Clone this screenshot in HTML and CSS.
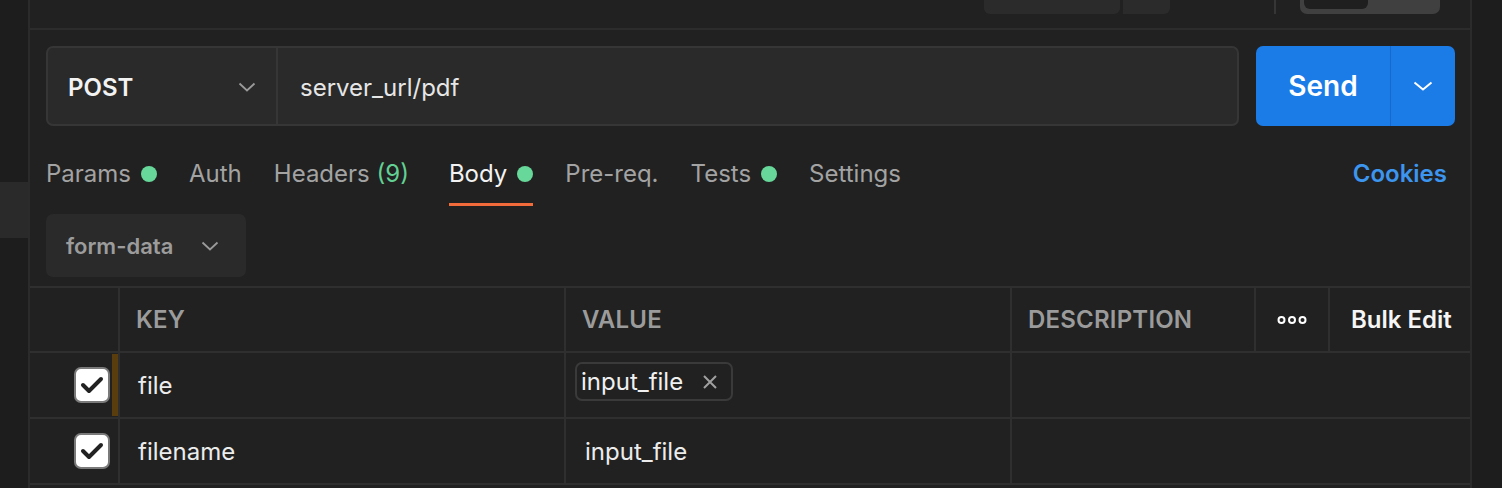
FILE: index.html
```html
<!DOCTYPE html>
<html>
<head>
<meta charset="utf-8">
<link rel="stylesheet" href="styles.css">
</head>
<body>
<div class="app">
  <div class="side side-left"><div class="side-block"></div></div>
  <div class="main">
    <div class="topbar">
      <div class="seg seg-a"></div>
      <div class="seg seg-b"></div>
      <div class="vline"></div>
      <div class="toggle"><div class="toggle-knob"></div></div>
    </div>

    <div class="request">
      <div class="urlbar">
        <div class="method">
          <span class="method-text">POST</span>
          <svg class="chev" width="18" height="10" viewBox="0 0 18 10"><path d="M1.5 1.5 L9 8.5 L16.5 1.5" fill="none" stroke="#9a9a9a" stroke-width="1.8"/></svg>
        </div>
        <div class="url">server_url/pdf</div>
      </div>
      <div class="send">
        <div class="send-main">Send</div>
        <div class="send-more">
          <svg width="20" height="10" viewBox="0 0 20 10"><path d="M1.5 1.5 L10 8.5 L18.5 1.5" fill="none" stroke="#ffffff" stroke-width="2"/></svg>
        </div>
      </div>
    </div>

    <div class="tabs">
      <div class="tab">Params<span class="dot"></span></div>
      <div class="tab">Auth</div>
      <div class="tab">Headers <span class="count">(9)</span></div>
      <div class="tab active">Body<span class="dot"></span></div>
      <div class="tab">Pre-req.</div>
      <div class="tab">Tests<span class="dot"></span></div>
      <div class="tab">Settings</div>
      <div class="tab cookies">Cookies</div>
    </div>

    <div class="bodytype">
      <div class="select">
        <span>form-data</span>
        <svg width="18" height="10" viewBox="0 0 18 10"><path d="M1.5 1.5 L9 8.5 L16.5 1.5" fill="none" stroke="#9a9a9a" stroke-width="1.8"/></svg>
      </div>
    </div>

    <div class="table">
      <div class="cell head c1"></div>
      <div class="cell head">KEY</div>
      <div class="cell head">VALUE</div>
      <div class="cell head">DESCRIPTION</div>
      <div class="cell head center">
        <svg width="30" height="10" viewBox="0 0 30 10"><circle cx="4.5" cy="5" r="3" fill="none" stroke="#fff" stroke-width="2"/><circle cx="15" cy="5" r="3" fill="none" stroke="#fff" stroke-width="2"/><circle cx="25.5" cy="5" r="3" fill="none" stroke="#fff" stroke-width="2"/></svg>
      </div>
      <div class="cell head bulk last">Bulk Edit</div>

      <div class="cell row c1 marked">
        <span class="check"><svg width="26" height="22" viewBox="0 0 26 22"><path d="M4 11 L10 17 L22 5" fill="none" stroke="#222" stroke-width="4" stroke-linecap="round" stroke-linejoin="round"/></svg></span>
        <span class="mark"></span>
      </div>
      <div class="cell row text">file</div>
      <div class="cell row val">
        <span class="chip">input_file<svg class="x" width="16" height="16" viewBox="0 0 16 16"><path d="M2 2 L14 14 M14 2 L2 14" stroke="#a0a0a0" stroke-width="2"/></svg></span>
      </div>
      <div class="cell row span3 last"></div>

      <div class="cell row c1">
        <span class="check"><svg width="26" height="22" viewBox="0 0 26 22"><path d="M4 11 L10 17 L22 5" fill="none" stroke="#222" stroke-width="4" stroke-linecap="round" stroke-linejoin="round"/></svg></span>
      </div>
      <div class="cell row text">filename</div>
      <div class="cell row text val2">input_file</div>
      <div class="cell row span3 last"></div>
    </div>
  </div>
  <div class="side side-right"></div>
</div>
</body>
</html>
```

FILE: styles.css
```css
* { box-sizing: border-box; }
html, body { margin: 0; padding: 0; }
body {
  width: 1502px;
  height: 488px;
  overflow: hidden;
  background: #1d1d1d;
  font-family: Inter, "Noto Sans", sans-serif;
  color: #e8e8e8;
}
.app { display: flex; height: 488px; }
.side { background: #1d1d1d; }
.side-left { width: 28px; padding-top: 182px; }
.side-block { height: 56px; background: #2a2a2a; }
.side-right { width: 30px; }

.main {
  width: 1444px;
  background: #212121;
  border-left: 2px solid #2b2b2b;
  border-right: 2px solid #2b2b2b;
  display: flex;
  flex-direction: column;
}

.topbar {
  height: 30px;
  border-bottom: 2px solid #2c2c2c;
  display: flex;
  align-items: flex-start;
  justify-content: flex-end;
  padding-right: 30px;
}
.seg { height: 14px; background: #2b2b2b; }
.seg-a { width: 136px; border-radius: 0 0 6px 6px; }
.seg-b { width: 47px; margin-left: 3px; border-radius: 0 0 6px 0; }
.vline { width: 2px; height: 14px; background: #363636; margin-left: 104px; }
.toggle {
  width: 140px; height: 14px; margin-left: 24px;
  background: #404040; border-radius: 0 0 7px 7px;
  padding-left: 4px;
}
.toggle-knob { width: 64px; height: 9px; background: #1f1f1f; border-radius: 0 0 6px 6px; }

.request {
  display: flex;
  padding: 16px 15px 0 16px;
  gap: 17px;
}
.urlbar {
  width: 1193px;
  height: 80px;
  display: flex;
  background: #2a2a2a;
  border: 2px solid #363636;
  border-radius: 7px;
}
.method {
  width: 230px;
  display: flex;
  align-items: center;
  justify-content: space-between;
  padding: 2px 20px 0 20px;
  border-right: 2px solid #363636;
}
.method-text { font-size: 24px; font-weight: 600; color: #f2f2f2; }
.url {
  display: flex; align-items: center;
  padding: 2px 0 0 22px;
  font-size: 24px; color: #e6e6e6;
}
.send {
  width: 199px;
  height: 80px;
  display: flex;
  background: #1b7ce8;
  border-radius: 7px;
  overflow: hidden;
}
.send-main {
  width: 135px;
  display: flex; align-items: center; justify-content: center;
  font-size: 28px; font-weight: 600; color: #fff;
  border-right: 1px solid #1769cc;
}
.send-more { flex: 1; display: flex; align-items: center; justify-content: center; }

.tabs {
  display: flex;
  align-items: flex-start;
  gap: 32px;
  margin-top: 33px;
  padding: 0 23px 0 16px;
}
.tab {
  display: flex;
  align-items: center;
  font-size: 24px;
  line-height: 30px;
  color: #a3a3a3;
  padding-bottom: 14px;
  border-bottom: 3px solid transparent;
  white-space: pre;
}
.tab.active { color: #f2f2f2; border-bottom-color: #f26b3a; margin-left: 8px; }
.count { color: #62d193; }
.dot {
  width: 16px; height: 16px; border-radius: 50%;
  background: #67d89a; margin-left: 10px;
}
.tab.cookies { margin-left: auto; color: #3c95ee; font-weight: 600; }

.bodytype { padding: 8px 0 0 16px; }
.select {
  width: 200px; height: 63px;
  background: #2a2a2a;
  border-radius: 7px;
  display: flex; align-items: center; justify-content: space-between;
  padding: 0 27px 0 20px;
  font-size: 22px; font-weight: 600; color: #9c9c9c;
}

.table {
  margin-top: 9px;
  display: grid;
  grid-template-columns: 90px 446px 446px 244px 74px 140px;
  grid-template-rows: 65px 66px 66px;
  border-top: 2px solid #2f2f2f;
}
.cell {
  border-right: 2px solid #2f2f2f;
  border-bottom: 2px solid #2f2f2f;
  display: flex;
  align-items: center;
  padding-left: 16px;
  font-size: 24px;
}
.cell.last { border-right: none; }
.head { font-weight: 600; color: #9b9b9b; letter-spacing: 0.2px; }
.head.center { justify-content: center; padding-left: 0; }
.head.bulk { color: #f5f5f5; letter-spacing: 0; padding-left: 21px; }
.span3 { grid-column: span 3; }
.c1 { padding-left: 44px; position: relative; }
.text { color: #ececec; padding-left: 18px; }
.val { padding-left: 9px; }
.val2 { padding-left: 19px; }
.check {
  width: 36px; height: 36px;
  background: #fff;
  border: 2px solid #7a7a7a;
  border-radius: 7px;
  display: flex; align-items: center; justify-content: center;
}
.mark {
  position: absolute;
  right: 0; top: 1px; bottom: 1px;
  width: 6px;
  background: #5a3d0c;
}
.chip {
  display: flex; align-items: center;
  height: 39px;
  margin-bottom: 7px;
  border: 2px solid #3a3a3a;
  border-radius: 7px;
  padding: 0 13px 0 4px;
  color: #f0f0f0;
}
.chip .x { margin-left: 19px; }
```
